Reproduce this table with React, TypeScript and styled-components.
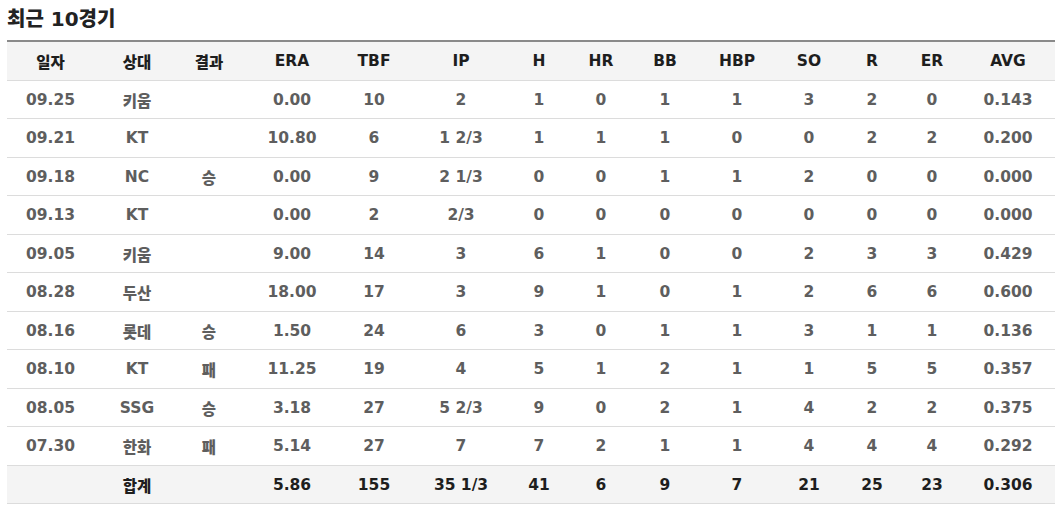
import { createGlobalStyle, styled } from 'styled-components';

const GlobalStyle = createGlobalStyle`
  body {
    margin: 0;
    background: #fff;
    font-family: "DejaVu Sans", "Noto Sans CJK KR", sans-serif;
  }
`;

const COLS = '87px 86px 58px 108px 56px 118px 38px 86px 42px 102px 42px 84px 36px 104px';

const Wrapper = styled.section`
  padding: 5px 5px 0 7px;
`;

const Title = styled.h2`
  margin: 0 0 7px;
  font-family: "DejaVu Sans", "Noto Sans CJK KR", sans-serif;
  font-size: 20px;
  font-weight: 900;
  color: #222;
  line-height: 28px;
`;

const Table = styled.div`
  width: 1048px;
  border-top: 2px solid #8a8a8a;
`;

const Row = styled.div<{ $variant?: 'head' | 'body' | 'total' }>`
  display: grid;
  grid-template-columns: ${COLS};
  height: 38.5px;
  box-sizing: border-box;
  border-bottom: 1px solid #dcdcdc;
  background: ${(p) => (p.$variant === 'body' ? '#fff' : '#f4f4f4')};
  color: ${(p) => (p.$variant === 'body' ? '#5e5e5e' : '#1e1e1e')};
`;

const Cell = styled.div`
  display: flex;
  align-items: center;
  justify-content: center;
  padding-top: 1px;
  font-size: 15.5px;
  font-weight: 800;
  white-space: nowrap;

  &:last-child {
    padding-left: 12px;
  }
`;

const HEAD = ['일자', '상대', '결과', 'ERA', 'TBF', 'IP', 'H', 'HR', 'BB', 'HBP', 'SO', 'R', 'ER', 'AVG'];

const GAMES: string[][] = [
  ['09.25', '키움', '', '0.00', '10', '2', '1', '0', '1', '1', '3', '2', '0', '0.143'],
  ['09.21', 'KT', '', '10.80', '6', '1 2/3', '1', '1', '1', '0', '0', '2', '2', '0.200'],
  ['09.18', 'NC', '승', '0.00', '9', '2 1/3', '0', '0', '1', '1', '2', '0', '0', '0.000'],
  ['09.13', 'KT', '', '0.00', '2', '2/3', '0', '0', '0', '0', '0', '0', '0', '0.000'],
  ['09.05', '키움', '', '9.00', '14', '3', '6', '1', '0', '0', '2', '3', '3', '0.429'],
  ['08.28', '두산', '', '18.00', '17', '3', '9', '1', '0', '1', '2', '6', '6', '0.600'],
  ['08.16', '롯데', '승', '1.50', '24', '6', '3', '0', '1', '1', '3', '1', '1', '0.136'],
  ['08.10', 'KT', '패', '11.25', '19', '4', '5', '1', '2', '1', '1', '5', '5', '0.357'],
  ['08.05', 'SSG', '승', '3.18', '27', '5 2/3', '9', '0', '2', '1', '4', '2', '2', '0.375'],
  ['07.30', '한화', '패', '5.14', '27', '7', '7', '2', '1', '1', '4', '4', '4', '0.292'],
];

const TOTAL = ['', '합계', '', '5.86', '155', '35 1/3', '41', '6', '9', '7', '21', '25', '23', '0.306'];

const App = () => {
  return (
    <Wrapper>
      <GlobalStyle />
      <Title>최근 10경기</Title>
      <Table>
        <Row $variant="head">
          {HEAD.map((h) => (
            <Cell key={h}>{h}</Cell>
          ))}
        </Row>
        {GAMES.map((g) => (
          <Row $variant="body" key={g[0]}>
            {g.map((v, i) => (
              <Cell key={i}>{v}</Cell>
            ))}
          </Row>
        ))}
        <Row $variant="total">
          {TOTAL.map((v, i) => (
            <Cell key={i}>{v}</Cell>
          ))}
        </Row>
      </Table>
    </Wrapper>
  );
};

export default App;
